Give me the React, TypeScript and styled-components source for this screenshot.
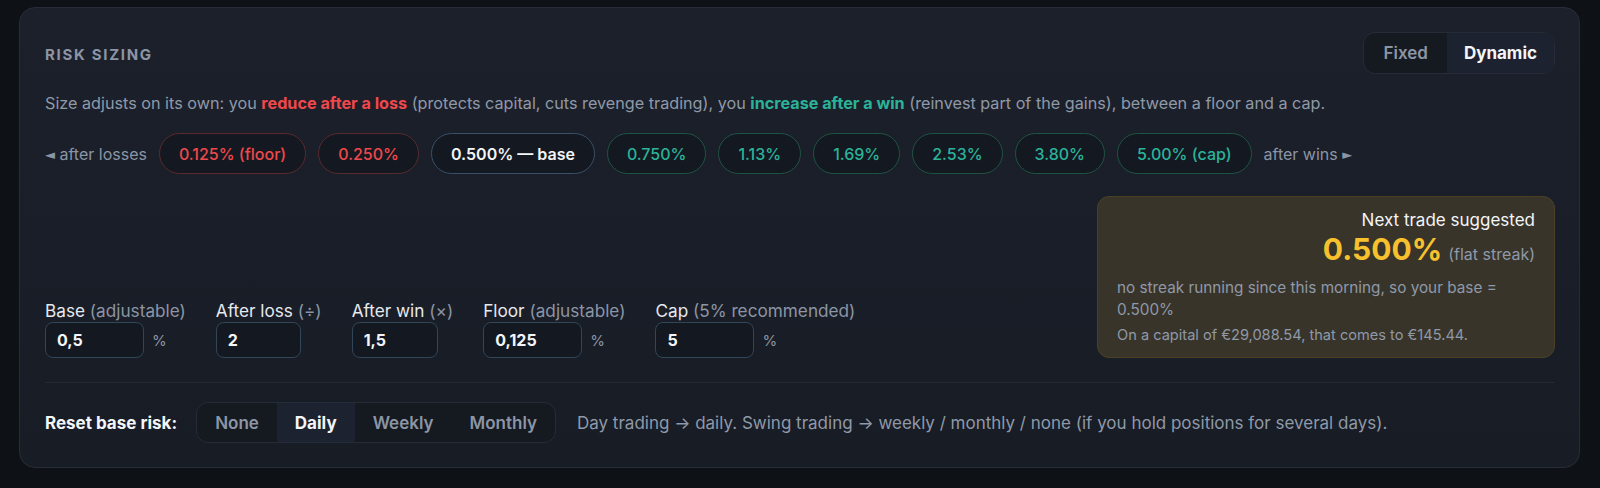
import styled, { createGlobalStyle, css } from 'styled-components';

const GlobalStyle = createGlobalStyle`
  * { box-sizing: border-box; }
  body {
    margin: 0;
    background: #0e1116;
    font-family: Inter, "Noto Sans", sans-serif;
    color: #e6e9ee;
  }
`;

const Page = styled.div`
  padding: 7px 20px 20px 19px;
`;

const Card = styled.section`
  display: flex;
  flex-direction: column;
  padding: 24px 24px 24px 25px;
  border: 1px solid #272d38;
  border-radius: 16px;
  background: linear-gradient(180deg, #1c202b 0%, #181c25 100%);
`;

const TitleRow = styled.div`
  display: flex;
  justify-content: space-between;
  align-items: center;
  height: 42px;
`;

const Title = styled.h2`
  margin: 2px 0 0;
  font-size: 15px;
  font-weight: 700;
  letter-spacing: 1.7px;
  color: #8b95a5;
`;

const Segmented = styled.div<{ $h: number }>`
  display: flex;
  height: ${(p) => p.$h}px;
  border: 1px solid #262c37;
  border-radius: 12px;
  background: #151920;
  overflow: hidden;
`;

const Segment = styled.button<{ $active?: boolean; $size?: number; $pad?: number }>`
  border: none;
  margin: 0;
  padding: 0 ${(p) => p.$pad ?? 18}px;
  font-family: inherit;
  font-size: ${(p) => p.$size ?? 17}px;
  font-weight: 600;
  color: #8b95a5;
  background: transparent;
  cursor: pointer;

  ${(p) =>
    p.$active &&
    css`
      color: #f3f5f8;
      font-weight: 700;
      background: #1d2230;
    `}
`;

const Description = styled.p`
  margin: 17px 0 0;
  font-size: 16.2px;
  line-height: 24px;
  color: #8f99a8;
`;

const Loss = styled.b`
  color: #f0484b;
  font-weight: 700;
`;

const Win = styled.b`
  color: #2bb39a;
  font-weight: 700;
`;

const ChipRow = styled.div`
  display: flex;
  align-items: center;
  gap: 12px;
  margin-top: 18px;
`;

const Hint = styled.span`
  font-size: 16px;
  color: #8b95a5;
`;

const Arrow = styled.span`
  font-family: "DejaVu Sans", sans-serif;
  font-size: 13px;
  vertical-align: 1px;
`;

type Tone = 'loss' | 'base' | 'win';

const toneColors: Record<Tone, { border: string; text: string }> = {
  loss: { border: '#5a2a2f', text: '#f0484b' },
  base: { border: '#3a5068', text: '#f3f5f8' },
  win: { border: '#1f5443', text: '#2bb39a' },
};

const Chip = styled.span<{ $tone: Tone }>`
  display: inline-flex;
  align-items: center;
  height: 41px;
  padding: 0 19px;
  border: 1px solid ${(p) => toneColors[p.$tone].border};
  border-radius: 21px;
  background: #141820;
  font-size: 16px;
  font-weight: ${(p) => (p.$tone === 'base' ? 600 : 500)};
  color: ${(p) => toneColors[p.$tone].text};
`;

const ParamsRow = styled.div`
  display: flex;
  justify-content: space-between;
  align-items: flex-end;
  margin-top: 22px;
`;

const Fields = styled.div`
  display: flex;
  gap: 30px;
`;

const Field = styled.div`
  display: flex;
  flex-direction: column;
  gap: 1px;
`;

const Label = styled.label`
  font-size: 17.2px;
  line-height: 21px;
  color: #e6e9ee;
`;

const Muted = styled.span`
  color: #8b95a5;
`;

const InputLine = styled.div`
  display: flex;
  align-items: center;
  gap: 8px;
`;

const Input = styled.input<{ $w: number }>`
  width: ${(p) => p.$w}px;
  height: 36px;
  padding: 0 11px;
  border: 1px solid #324659;
  border-radius: 8px;
  background: #131821;
  font-family: inherit;
  font-size: 16px;
  font-weight: 700;
  color: #f3f5f8;
  outline: none;
`;

const Unit = styled.span`
  font-size: 15px;
  color: #8b95a5;
`;

const Suggestion = styled.div`
  width: 458px;
  padding: 11px 19px 11px 19px;
  border: 1px solid #4a4125;
  border-radius: 12px;
  background: #38342a;
`;

const SuggestTitle = styled.div`
  text-align: right;
  font-size: 17px;
  font-weight: 400;
  line-height: 24px;
  color: #f3f5f8;
`;

const SuggestValue = styled.div`
  text-align: right;
  line-height: 34px;
`;

const BigPct = styled.span`
  font-size: 30px;
  font-weight: 700;
  color: #f6c12d;
`;

const Streak = styled.span`
  margin-left: 6px;
  font-size: 16px;
  color: #8f99a8;
`;

const Note = styled.p<{ $size: number }>`
  margin: ${(p) => (p.$size > 15 ? '6px' : '3px')} 0 0;
  font-size: ${(p) => p.$size}px;
  line-height: 22px;
  color: #8f99a8;
`;

const Divider = styled.hr`
  margin: 24px 0 0;
  border: none;
  border-top: 1px solid #242a34;
`;

const ResetRow = styled.div`
  display: flex;
  align-items: center;
  margin-top: 19px;
`;

const ResetLabel = styled.span`
  margin-right: 19px;
  font-size: 17px;
  font-weight: 700;
  color: #f3f5f8;
`;

const ResetHint = styled.span`
  margin-left: 21px;
  font-size: 17px;
  color: #8f99a8;
`;

const chips: { label: string; tone: Tone }[] = [
  { label: '0.125% (floor)', tone: 'loss' },
  { label: '0.250%', tone: 'loss' },
  { label: '0.500% — base', tone: 'base' },
  { label: '0.750%', tone: 'win' },
  { label: '1.13%', tone: 'win' },
  { label: '1.69%', tone: 'win' },
  { label: '2.53%', tone: 'win' },
  { label: '3.80%', tone: 'win' },
  { label: '5.00% (cap)', tone: 'win' },
];

const fields = [
  { name: 'Base', note: '(adjustable)', value: '0,5', width: 99, unit: true },
  { name: 'After loss', note: '(÷)', value: '2', width: 85, unit: false },
  { name: 'After win', note: '(×)', value: '1,5', width: 86, unit: false },
  { name: 'Floor', note: '(adjustable)', value: '0,125', width: 99, unit: true },
  { name: 'Cap', note: '(5% recommended)', value: '5', width: 99, unit: true },
];

function App() {
  return (
    <Page>
      <GlobalStyle />
      <Card>
        <TitleRow>
          <Title>RISK SIZING</Title>
          <Segmented $h={42}>
            <Segment $pad={19}>Fixed</Segment>
            <Segment $pad={17} $active>Dynamic</Segment>
          </Segmented>
        </TitleRow>

        <Description>
          Size adjusts on its own: you <Loss>reduce after a loss</Loss> (protects capital, cuts revenge
          trading), you <Win>increase after a win</Win> (reinvest part of the gains), between a floor and a cap.
        </Description>

        <ChipRow>
          <Hint>
            <Arrow>◄</Arrow> after losses
          </Hint>
          {chips.map((c) => (
            <Chip key={c.label} $tone={c.tone}>
              {c.label}
            </Chip>
          ))}
          <Hint>
            after wins <Arrow>►</Arrow>
          </Hint>
        </ChipRow>

        <ParamsRow>
          <Fields>
            {fields.map((f) => (
              <Field key={f.name}>
                <Label>
                  {f.name} <Muted>{f.note}</Muted>
                </Label>
                <InputLine>
                  <Input $w={f.width} defaultValue={f.value} />
                  {f.unit && <Unit>%</Unit>}
                </InputLine>
              </Field>
            ))}
          </Fields>

          <Suggestion>
            <SuggestTitle>Next trade suggested</SuggestTitle>
            <SuggestValue>
              <BigPct>0.500%</BigPct>
              <Streak>(flat streak)</Streak>
            </SuggestValue>
            <Note $size={15.3}>no streak running since this morning, so your base = 0.500%</Note>
            <Note $size={14.6}>On a capital of €29,088.54, that comes to €145.44.</Note>
          </Suggestion>
        </ParamsRow>

        <Divider />

        <ResetRow>
          <ResetLabel>Reset base risk:</ResetLabel>
          <Segmented $h={41}>
            <Segment>None</Segment>
            <Segment $active>Daily</Segment>
            <Segment>Weekly</Segment>
            <Segment>Monthly</Segment>
          </Segmented>
          <ResetHint>
            Day trading → daily. Swing trading → weekly / monthly / none (if you hold positions for several days).
          </ResetHint>
        </ResetRow>
      </Card>
    </Page>
  );
}

export default App;
